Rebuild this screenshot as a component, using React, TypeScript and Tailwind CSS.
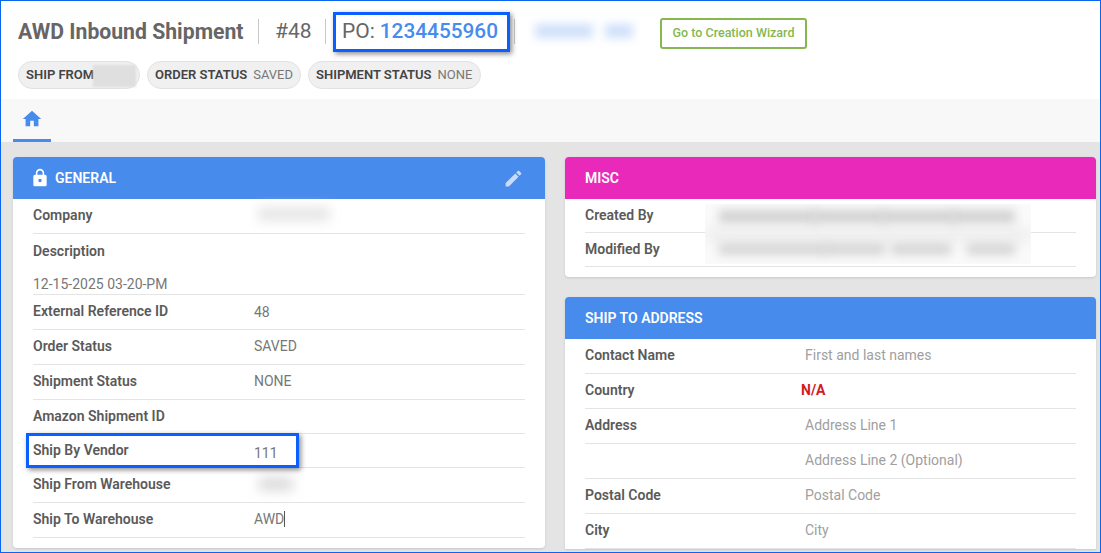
import React from "react";
import { MdEdit, MdHome, MdLock } from "react-icons/md";

interface RowProps {
  label?: string;
  value?: React.ReactNode;
  height?: string;
  valueClass?: string;
}

function Row({ label, value, height = "h-[35px]", valueClass = "text-[#777] ml-[221px]" }: RowProps) {
  return (
    <div className={`${height} relative flex items-center border-b border-[#e4e4e4] pb-[2px] text-sm`}>
      {label && <span className="absolute left-0 font-semibold text-[#5a5a5a]">{label}</span>}
      {value && <span className={valueClass}>{value}</span>}
    </div>
  );
}

function Blur({ className }: { className: string }) {
  return <div className={`absolute ${className}`} />;
}

function Chip({ label, value, width }: { label: string; value?: string; width: string }) {
  return (
    <div className={`${width} flex h-[28px] shrink-0 items-center gap-[6px] whitespace-nowrap rounded-full border border-[#e2e2e2] bg-[#f0f0f0] pl-[7px] text-[13px]`}>
      <span className="font-semibold text-[#444]">{label}</span>
      {value && <span className="text-[#777]">{value}</span>}
    </div>
  );
}

const topSmears = [
  "left-[14px] w-[98px]",
  "left-[108px] w-[72px]",
  "left-[176px] w-[74px]",
  "left-[246px] w-[64px]",
];

const bottomSmears = [
  "left-[14px] w-[108px]",
  "left-[118px] w-[62px]",
  "left-[186px] w-[60px]",
  "left-[262px] w-[48px]",
];

export default function App() {
  const placeholder = "text-[#a0a0a0] ml-[220px]";

  return (
    <div className="relative flex h-[553px] w-[1101px] flex-col overflow-hidden border border-[#0a66f0] bg-[#e4e4e4] font-['Roboto',sans-serif]">
      <div className="h-[98px] shrink-0 bg-white pl-[17px]">
        <div className="mt-[18px] flex h-[25px] items-center text-[21px] text-[#666]">
          <span className="w-[225px] whitespace-nowrap text-[21.2px] font-bold">AWD Inbound Shipment</span>
          <div className="ml-[15px] h-[25px] w-px bg-[#c8c8c8]" />
          <span className="ml-[16px] w-[35px]">#48</span>
          <div className="ml-[15px] h-[25px] w-px bg-[#c8c8c8]" />
          <span className="ml-[16px]">PO:</span>
          <span className="ml-[5px] text-[20.8px] font-medium text-[#478bec]">1234455960</span>
          <div className="ml-[16px] h-[25px] w-px bg-[#c8c8c8]" />
          <div className="relative ml-[14px] h-[25px] w-[131px]">
            <Blur className="left-[6px] top-[5px] h-[14px] w-[58px] bg-[#cfe0fa] blur-[5px]" />
            <Blur className="left-[76px] top-[5px] h-[14px] w-[28px] bg-[#cfe0fa] blur-[5px]" />
          </div>
          <button className="mt-[3px] h-[31px] w-[147px] shrink-0 rounded-[3px] border-2 border-[#85b84f] text-[12.5px] font-medium text-[#85b84f]">
            Go to Creation Wizard
          </button>
        </div>
        <div className="mt-[17px] flex gap-[7px]">
          <div className="relative">
            <Chip label="SHIP FROM" width="w-[122px]" />
            <div className="absolute left-[75px] top-[4px] h-[22px] w-[43px] bg-[#dfdfdf] blur-[1px]" />
          </div>
          <Chip label="ORDER STATUS" value="SAVED" width="w-[154px]" />
          <Chip label="SHIPMENT STATUS" value="NONE" width="w-[173px]" />
        </div>
      </div>

      <div className="h-[43px] shrink-0 bg-[#f8f8f8] pl-[12px]">
        <div className="flex h-[43px] w-[38px] items-center justify-center border-b-[3px] border-[#478bec] text-[#478bec]">
          <MdHome size={22} />
        </div>
      </div>

      <div className="flex gap-5 pl-[12px] pt-[15px]">
        <div className="h-[391px] w-[532px] rounded-[4px] bg-white shadow-sm">
          <div className="flex h-[42px] items-center justify-between rounded-t-[4px] bg-[#478bec] pl-[17px] pr-[21px] text-sm font-semibold text-white">
            <div className="flex items-center gap-[5px]">
              <MdLock size={20} />
              <span>GENERAL</span>
            </div>
            <MdEdit size={21} className="opacity-70" />
          </div>
          <div className="relative px-5">
            <Row label="Company" />
            <Blur className="left-[245px] top-[8px] h-[14px] w-[72px] bg-[#e6e6e6] blur-[6px]" />
            <div className="relative h-[61px] border-b border-[#e4e4e4] text-sm">
              <span className="absolute left-0 top-[7px] font-semibold text-[#5a5a5a]">Description</span>
              <span className="absolute bottom-0 left-0 text-[#777]">12-15-2025 03-20-PM</span>
            </div>
            <Row label="External Reference ID" value={<span className="relative top-[1px]">48</span>} />
            <Row label="Order Status" value="SAVED" />
            <Row label="Shipment Status" value="NONE" />
            <Row label="Amazon Shipment ID" height="h-[34px]" />
            <Row label="Ship By Vendor" value={<span className="relative top-[3px]">111</span>} height="h-[34px]" />
            <Row label="Ship From Warehouse" />
            <Blur className="left-[246px] top-[278px] h-[14px] w-[34px] bg-[#dcdcdc] blur-[6px]" />
            <Row label="Ship To Warehouse" value={<span className="border-r border-[#555]">AWD</span>} />
          </div>
        </div>

        <div className="flex w-[531px] flex-col gap-5">
          <div className="relative h-[120px] rounded-[4px] bg-white shadow-sm">
            <div className="flex h-[42px] items-center rounded-t-[4px] bg-[#e829b9] pl-5 text-sm font-semibold text-white">
              MISC
            </div>
            <div className="px-5">
              <Row label="Created By" height="h-[34px]" />
              <Row label="Modified By" height="h-[34px]" />
            </div>
            <div className="absolute left-[140px] top-[47px] h-[60px] w-[326px] overflow-hidden bg-[#fafafa]">
              <div className="absolute left-0 top-[24px] h-[14px] w-full bg-[#eeeeee] blur-[6px]" />
              {topSmears.map((s) => (
                <div key={s} className={`absolute top-[6px] h-[13px] bg-[#d2d2d2] blur-[5px] ${s}`} />
              ))}
              {bottomSmears.map((s) => (
                <div key={s} className={`absolute top-[39px] h-[12px] bg-[#d6d6d6] blur-[5px] ${s}`} />
              ))}
            </div>
          </div>

          <div className="rounded-t-[4px] bg-white shadow-sm">
            <div className="flex h-[42px] items-center rounded-t-[4px] bg-[#478bec] pl-5 text-sm font-semibold text-white">
              SHIP TO ADDRESS
            </div>
            <div className="px-5">
              <Row label="Contact Name" value="First and last names" valueClass={placeholder} />
              <Row label="Country" value="N/A" valueClass="ml-[216px] font-bold text-[#d01c22]" />
              <Row label="Address" value="Address Line 1" valueClass={placeholder} />
              <Row value="Address Line 2 (Optional)" valueClass={placeholder} />
              <Row label="Postal Code" value="Postal Code" valueClass={placeholder} />
              <Row label="City" value="City" valueClass={placeholder} />
            </div>
          </div>
        </div>
      </div>

      {/* annotation boxes drawn over the page */}
      <div className="absolute left-[332px] top-[11px] h-[40px] w-[177px] border-[3px] border-[#0a5fff] shadow-[2px_2px_5px_rgba(0,0,0,0.45)]" />
      <div className="absolute left-[25px] top-[432px] h-[35px] w-[273px] border-[3px] border-[#0a5fff] shadow-[2px_2px_5px_rgba(0,0,0,0.45)]" />
    </div>
  );
}
